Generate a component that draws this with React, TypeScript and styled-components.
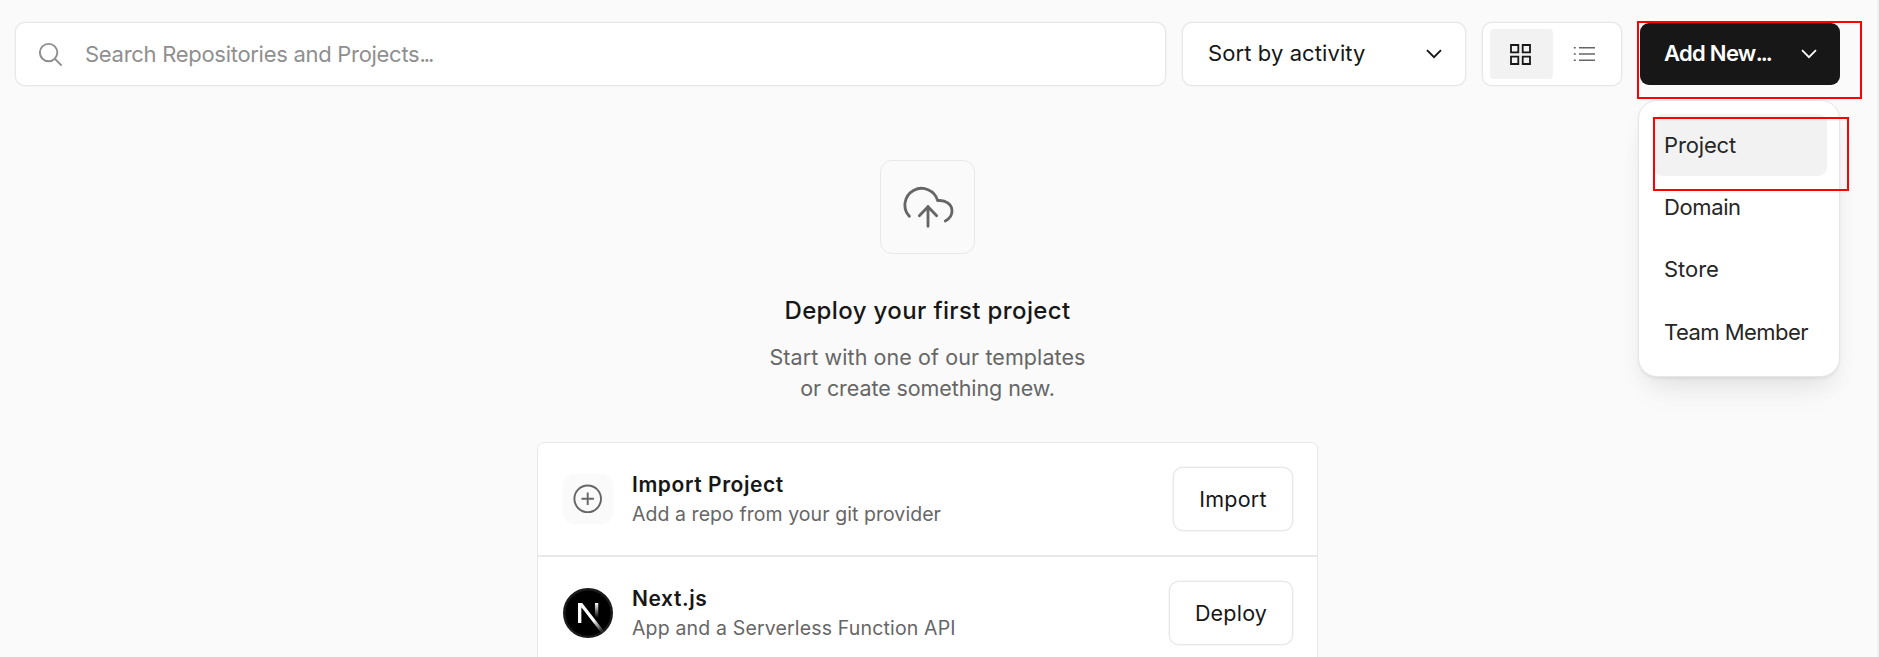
import React from 'react';
import styled, { createGlobalStyle, css } from 'styled-components';

const GlobalStyle = createGlobalStyle`
  *, *::before, *::after { box-sizing: border-box; }
  body {
    margin: 0;
    background: #fafafa;
    overflow: hidden;
    font-family: Inter, "Liberation Sans", sans-serif;
    color: #171717;
  }
  button, input { font-family: inherit; color: inherit; }
`;

const Page = styled.div`
  height: 657px;
  overflow: hidden;
  padding: 22px 37px 0 15px;
  border-right: 2px solid #f2f2f2;
`;

const surface = css`
  background: #fff;
  border: 1.5px solid #e8e8e8;
  border-radius: 10px;
  box-shadow: 0 0 0 0.5px #ededed;
`;

const Toolbar = styled.header`
  display: flex;
  gap: 16px;
  height: 64px;
`;

const SearchBox = styled.label`
  ${surface}
  flex: 1;
  display: flex;
  align-items: center;
  padding-left: 23px;
  gap: 22px;
  color: #8f8f8f;
`;

const SearchText = styled.span`
  font-size: 22px;
  line-height: 28px;
  letter-spacing: -0.29px;
`;

const Dots = styled.span`
  letter-spacing: -2px;
`;

const SortSelect = styled.button`
  ${surface}
  width: 284px;
  display: flex;
  align-items: center;
  justify-content: space-between;
  padding: 0 22px 2px 25px;
  font-size: 22px;
  letter-spacing: 0.09px;
`;

const ViewToggle = styled.div`
  ${surface}
  width: 140px;
  display: flex;
  padding: 6px 7px;
`;

const ViewOption = styled.button<{ $active?: boolean }>`
  flex: 1;
  display: grid;
  place-items: center;
  padding: ${p => (p.$active ? '0 2px 0 0' : '0')};
  border: 0;
  border-radius: 4px;
  background: ${p => (p.$active ? '#f2f2f2' : 'transparent')};
  color: ${p => (p.$active ? '#171717' : '#666')};
`;

const AddWrap = styled.div`
  position: relative;
  width: 200px;
  margin-left: 2px;
  padding: 1px 0;
`;

const AddButton = styled.button`
  width: 200px;
  height: 62px;
  display: flex;
  align-items: center;
  justify-content: space-between;
  padding: 0 22px 2px 24px;
  border: 0;
  border-radius: 9px;
  background: #171717;
  color: #fff;
  font-size: 22px;
  font-weight: 600;
  letter-spacing: -0.7px;
`;

const Menu = styled.div`
  position: absolute;
  top: 78px;
  left: -2px;
  width: 202px;
  height: 277px;
  padding: 13px 12px 0 15px;
  background: #fff;
  border-radius: 19px;
  border: 1.5px solid #e6e6e6;
  box-shadow: 0 2px 3px rgba(0, 0, 0, 0.05), 0 12px 24px -6px rgba(0, 0, 0, 0.07), 0 24px 36px -12px rgba(0, 0, 0, 0.05);
`;

const MenuItem = styled.div<{ $spacing: number; $active?: boolean }>`
  height: 62.4px;
  display: flex;
  align-items: center;
  padding: 0 0 1px 10px;
  border-radius: 9px;
  background: ${p => (p.$active ? '#f2f2f2' : 'transparent')};
  color: #262626;
  font-size: 22px;
  white-space: nowrap;
  letter-spacing: ${p => p.$spacing}px;
`;

const Marker = styled.div<{ $x: number; $y: number; $w: number; $h: number }>`
  position: absolute;
  left: ${p => p.$x}px;
  top: ${p => p.$y}px;
  width: ${p => p.$w}px;
  height: ${p => p.$h}px;
  border: 2px solid #fd0000;
  pointer-events: none;
`;

const Hero = styled.main`
  display: flex;
  flex-direction: column;
  align-items: center;
  padding-top: 74px;
`;

const CloudTile = styled.div`
  width: 95px;
  height: 94px;
  padding: 24px 0 0 22px;
  border: 1px solid #e8e8e8;
  border-radius: 12px;
`;

const Heading = styled.h1`
  margin: 41px 0 0;
  font-size: 24px;
  line-height: 32px;
  font-weight: 500;
  letter-spacing: 0.37px;
`;

const Subheading = styled.p`
  margin: 15px 0 0;
  font-size: 21.5px;
  line-height: 31px;
  text-align: center;
  color: #666;
`;

const SubheadingLine = styled.span<{ $spacing: number }>`
  display: block;
  letter-spacing: ${p => p.$spacing}px;
`;

const Card = styled.section`
  width: 781px;
  margin-top: 38px;
  background: #fff;
  border: 1px solid #e8e8e8;
  border-radius: 7px;
`;

const Row = styled.div`
  height: 112px;
  display: flex;
  align-items: center;
  padding: 0 24px 0 25px;

  & + & {
    height: 114px;
    border-top: 2px solid #e9e9e9;
  }
`;

const IconTile = styled.div`
  width: 50px;
  height: 50px;
  display: grid;
  place-items: center;
  border-radius: 12px;
  background: #fafafa;
  color: #666;
`;

const RowText = styled.div`
  flex: 1;
  padding-left: 19px;
`;

const RowTitle = styled.div`
  font-size: 21px;
  line-height: 30px;
  font-weight: 600;
  letter-spacing: 0.57px;
`;

const RowDescription = styled.div<{ $spacing: number }>`
  font-size: 19.5px;
  line-height: 29px;
  letter-spacing: ${p => p.$spacing}px;
  color: #666;
`;

const RowButton = styled.button<{ $width: number }>`
  ${surface}
  width: ${p => p.$width}px;
  height: 64px;
  padding: 0 0 1px;
  font-size: 21.5px;
  letter-spacing: 0.2px;
`;

const Chevron = ({ weight }: { weight: number }) => (
  <svg width="18" height="12" viewBox="0 0 18 12" fill="none" stroke="currentColor" strokeWidth={weight}>
    <path d="M2 3.2 9 10.2 16 3.2" />
  </svg>
);

const SearchIcon = () => (
  <svg width="24" height="24" viewBox="0 0 24 24" fill="none" stroke="currentColor" strokeWidth="1.9">
    <circle cx="9.6" cy="10.6" r="8.7" />
    <path d="m15.8 16.8 6.9 6.8" />
  </svg>
);

const GridIcon = () => (
  <svg width="21" height="21" viewBox="0 0 21 21" fill="none" stroke="currentColor" strokeWidth="1.8">
    <path d="M1 1h7.3v7.3H1zM12.7 1H20v7.3h-7.3zM1 12.7h7.3V20H1zM12.7 12.7H20V20h-7.3z" />
  </svg>
);

const ListIcon = () => (
  <svg width="22" height="16" viewBox="0 0 22 16" stroke="currentColor" strokeWidth="1.5">
    <path d="M.8 1.7h2M.8 8h2M.8 14.3h2M6 1.7h16M6 8h16M6 14.3h16" />
  </svg>
);

const CloudUpIcon = () => (
  <svg width="51" height="44" viewBox="84 90 153 132" fill="none" stroke="#666" strokeWidth="8.5" strokeLinecap="round" strokeLinejoin="round">
    <path d="M103 184A50 50 0 1 1 188 137C211 134 231 147 231 168C231 181 224 191 211 198" />
    <path d="M159 214V154M133 182l26-27 26 27" />
  </svg>
);

const PlusCircleIcon = () => (
  <svg width="30" height="30" viewBox="0 0 30 30" fill="none" stroke="currentColor" strokeWidth="1.9">
    <circle cx="14.7" cy="14.8" r="13.3" />
    <path d="M14.7 8.6V21M8.5 14.8h12.4" />
  </svg>
);

const NextLogo = () => (
  <svg width="50" height="50" viewBox="0 0 180 180">
    <defs>
      <linearGradient id="slant" x1="109" y1="116.5" x2="144.5" y2="160.5" gradientUnits="userSpaceOnUse">
        <stop stopColor="#fff" />
        <stop offset="1" stopColor="#fff" stopOpacity="0" />
      </linearGradient>
      <linearGradient id="stem" x1="121" y1="54" x2="120.8" y2="106.9" gradientUnits="userSpaceOnUse">
        <stop stopColor="#fff" />
        <stop offset="1" stopColor="#fff" stopOpacity="0" />
      </linearGradient>
    </defs>
    <circle cx="90" cy="90" r="85.5" fill="#000" stroke="#1b1b1b" strokeWidth="9" />
    <path fill="url(#slant)" d="M149.5 157.5 69.1 54H54v72h12.1V69.4L140 164.8c3.3-2.2 6.5-4.6 9.5-7.3Z" />
    <rect x="115" y="54" width="12" height="72" fill="url(#stem)" />
  </svg>
);

export default function App() {
  return (
    <>
      <GlobalStyle />
      <Page>
        <Toolbar>
          <SearchBox>
            <SearchIcon />
            <SearchText>
              Search Repositories and Projects<Dots>...</Dots>
            </SearchText>
          </SearchBox>
          <SortSelect>
            Sort by activity
            <Chevron weight={1.9} />
          </SortSelect>
          <ViewToggle>
            <ViewOption $active aria-label="Grid view"><GridIcon /></ViewOption>
            <ViewOption aria-label="List view"><ListIcon /></ViewOption>
          </ViewToggle>
          <AddWrap>
            <AddButton>
              <span>Add New<Dots>...</Dots></span>
              <Chevron weight={1.7} />
            </AddButton>
            <Menu>
              <MenuItem $active $spacing={-0.15}>Project</MenuItem>
              <MenuItem $spacing={-0.38}>Domain</MenuItem>
              <MenuItem $spacing={-0.05}>Store</MenuItem>
              <MenuItem $spacing={-0.54}>Team Member</MenuItem>
            </Menu>
            <Marker $x={-3} $y={-1} $w={225} $h={78} />
            <Marker $x={13} $y={95} $w={196} $h={74} />
          </AddWrap>
        </Toolbar>
        <Hero>
          <CloudTile><CloudUpIcon /></CloudTile>
          <Heading>Deploy your first project</Heading>
          <Subheading>
            <SubheadingLine $spacing={0.09}>Start with one of our templates</SubheadingLine>
            <SubheadingLine $spacing={-0.09}>or create something new.</SubheadingLine>
          </Subheading>
          <Card>
            <Row>
              <IconTile><PlusCircleIcon /></IconTile>
              <RowText>
                <RowTitle>Import Project</RowTitle>
                <RowDescription $spacing={0.06}>Add a repo from your git provider</RowDescription>
              </RowText>
              <RowButton $width={120}>Import</RowButton>
            </Row>
            <Row>
              <NextLogo />
              <RowText>
                <RowTitle>Next.js</RowTitle>
                <RowDescription $spacing={0.16}>App and a Serverless Function API</RowDescription>
              </RowText>
              <RowButton $width={124}>Deploy</RowButton>
            </Row>
          </Card>
        </Hero>
      </Page>
    </>
  );
}
